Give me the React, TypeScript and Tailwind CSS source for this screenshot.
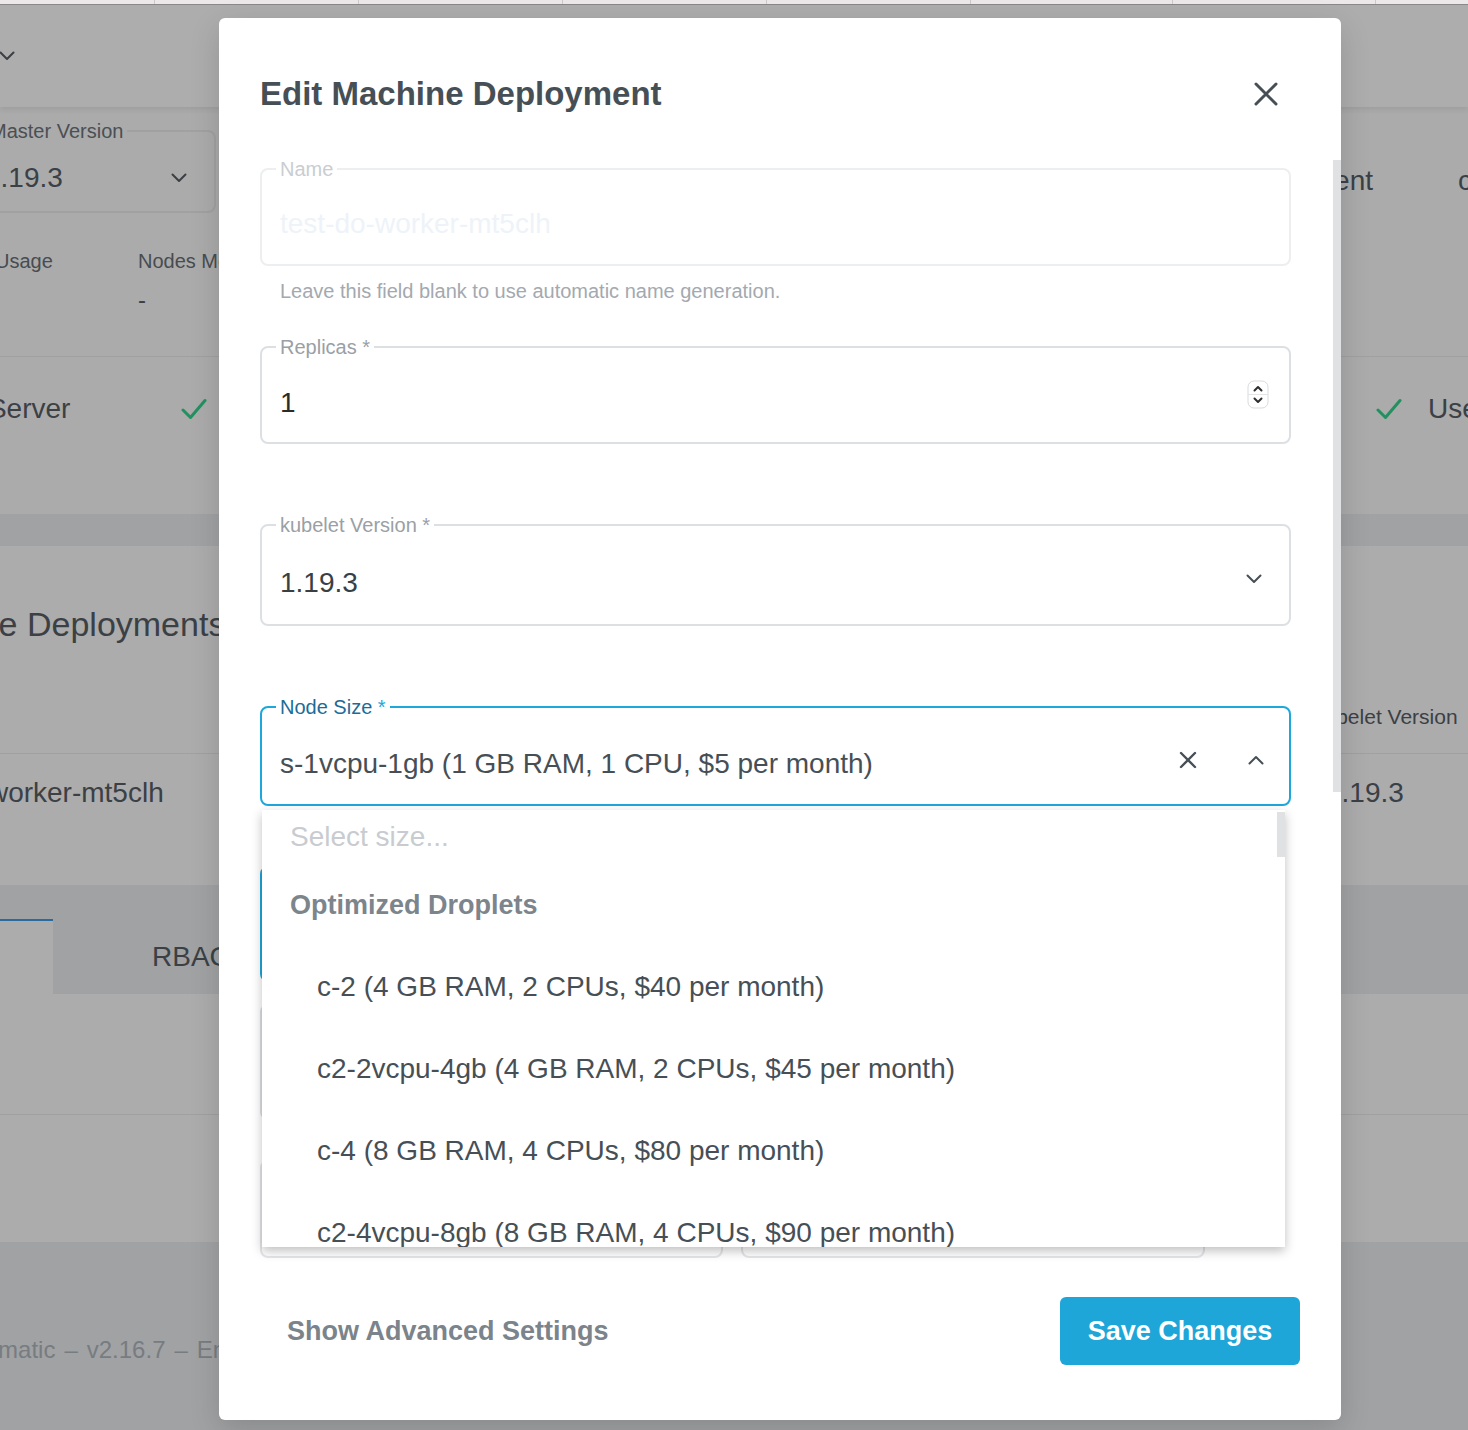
const options = [
  "c-2 (4 GB RAM, 2 CPUs, $40 per month)",
  "c2-2vcpu-4gb (4 GB RAM, 2 CPUs, $45 per month)",
  "c-4 (8 GB RAM, 4 CPUs, $80 per month)",
  "c2-4vcpu-8gb (8 GB RAM, 4 CPUs, $90 per month)",
]

function ChevronDown({ className = "" }: { className?: string }) {
  return (
    <svg width="16" height="10" viewBox="0 0 16 10" className={className} fill="none">
      <path d="M1.5 1.5 8 8l6.5-6.5" stroke="currentColor" strokeWidth="2" strokeLinecap="round" strokeLinejoin="round" />
    </svg>
  )
}

function CheckMark({ className = "" }: { className?: string }) {
  return (
    <svg width="26" height="22" viewBox="0 0 26 22" className={className} fill="none">
      <path d="M2 12l7.5 7.5L24 2.5" stroke="currentColor" strokeWidth="3" strokeLinecap="round" strokeLinejoin="round" />
    </svg>
  )
}

function Background() {
  return (
    <div className="flex flex-col text-[#3b4045]">
      <div className="flex h-[4px] bg-[#ece7e9]">
        <div className="w-[155px] shrink-0 border-r border-[#cdc9cb]" />
        <div className="w-[204px] shrink-0 border-r border-[#cdc9cb]" />
        <div className="w-[204px] shrink-0 border-r border-[#cdc9cb]" />
        <div className="w-[204px] shrink-0 border-r border-[#cdc9cb]" />
        <div className="w-[204px] shrink-0 border-r border-[#cdc9cb]" />
        <div className="w-[202px] shrink-0 border-r border-[#cdc9cb]" />
        <div className="w-[203px] shrink-0 border-r border-[#cdc9cb]" />
      </div>
      <div className="h-px bg-[#8b898a]" />

      {/* top card */}
      <div className="relative z-[1] flex h-[102px] items-center bg-[#adadad] shadow-[0_3px_5px_rgba(0,0,0,0.07)]">
        <ChevronDown className="-ml-[1px] text-[#3b4045]" />
      </div>

      {/* cluster details */}
      <div className="flex h-[250px] border-b border-[#a0a0a0] bg-[#ababab]">
        <div className="flex flex-col pt-[23px]">
          <div className="relative -ml-[100px] h-[83px] w-[316px] rounded-lg border-2 border-[#a1a1a1]">
            <span className="absolute -top-[11px] left-[84px] bg-[#ababab] px-1 text-[20px] leading-[20px] whitespace-nowrap text-[#4a4f54]">
              Master Version
            </span>
            <div className="flex h-full items-center justify-between pt-[13px] pl-[83px] pr-[27px]">
              <span className="text-[28px] leading-[34px]">1.19.3</span>
              <ChevronDown className="text-[#3b4045]" />
            </div>
          </div>
          <div className="-ml-[5px] mt-[36px] flex text-[20px] leading-[24px] text-[#474c51]">
            <div className="w-[143px] shrink-0">Usage</div>
            <div className="shrink-0 whitespace-nowrap">Nodes Metrics</div>
          </div>
          <div className="ml-[138px] mt-[15px] text-[24px] leading-[24px]">-</div>
        </div>
        <div className="ml-auto flex w-[268px] shrink-0 items-start pt-[57px] whitespace-nowrap">
          <div className="w-[173px] shrink-0 text-right text-[28px] leading-[34px]">Environment</div>
          <div className="ml-[85px] shrink-0 text-[28px] leading-[34px]">cri</div>
        </div>
      </div>

      {/* health row */}
      <div className="flex h-[157px] items-start bg-[#ababab] pt-[35px]">
        <div className="-ml-[65px] flex shrink-0 items-center">
          <span className="shrink-0 text-[28px] leading-[34px] whitespace-nowrap">API Server</span>
          <CheckMark className="ml-[111px] shrink-0 text-[#22915f]" />
        </div>
        <div className="ml-auto flex w-[92px] shrink-0 items-center whitespace-nowrap">
          <CheckMark className="shrink-0 text-[#22915f]" />
          <span className="ml-[26px] shrink-0 text-[28px] leading-[34px]">User SSH Keys</span>
        </div>
      </div>

      <div className="h-[32px] bg-[#a1a2a4]" />

      {/* machine deployments card */}
      <div className="flex h-[208px] border-b border-[#a0a0a0] bg-[#acacac]">
        <div className="-ml-[111px] shrink-0 pt-[58px] text-[34px] leading-[40px] whitespace-nowrap">Machine Deployments</div>
        <div className="ml-auto w-[154px] shrink-0 pt-[159px] text-[21px] leading-[24px] whitespace-nowrap">kubelet Version</div>
      </div>
      <div className="flex h-[131px] bg-[#acacac]">
        <div className="-ml-[107px] shrink-0 pt-[22px] text-[28px] leading-[34px] whitespace-nowrap">test-do-worker-mt5clh</div>
        <div className="ml-auto w-[142px] shrink-0 pt-[22px] text-[28px] leading-[34px]">1.19.3</div>
      </div>

      {/* tabs */}
      <div className="flex flex-col bg-[#a1a2a4] pt-[34px]">
        <div className="flex h-[75px] items-center">
          <div className="h-full w-[53px] shrink-0 border-t-2 border-[#2b6a9c] bg-[#acacac]" />
          <span className="ml-[99px] text-[28px] leading-[34px]">RBAC</span>
        </div>
      </div>
      <div className="h-[121px] border-b border-[#a0a0a0] bg-[#acacac]" />
      <div className="h-[127px] bg-[#acacac]" />

      {/* footer */}
      <div className="h-[200px] bg-[#a1a2a4] pt-[94px]">
        <div className="-ml-[66px] flex text-[24px] leading-[28px] whitespace-nowrap text-[#777c81]">
          <span>Kubermatic</span>
          <span className="mx-[9px]">–</span>
          <span>v2.16.7</span>
          <span className="mx-[9px]">–</span>
          <span>Enterprise Edition</span>
        </div>
      </div>
    </div>
  )
}

function Outlined({
  label,
  labelClass,
  borderClass,
  heightClass,
  children,
}: {
  label: React.ReactNode
  labelClass: string
  borderClass: string
  heightClass: string
  children: React.ReactNode
}) {
  return (
    <div className={`relative rounded-lg border-2 ${borderClass} ${heightClass}`}>
      <span className={`absolute -top-[11px] left-[14px] bg-white px-1 text-[20px] leading-[20px] ${labelClass}`}>{label}</span>
      <div className="flex h-full items-center pl-[18px] pt-[16px]">{children}</div>
    </div>
  )
}

function Modal() {
  return (
    <div className="absolute left-[219px] top-[18px] z-10 h-[1402px] w-[1122px] overflow-hidden rounded-[6px] bg-white shadow-[0_10px_30px_rgba(0,0,0,0.15)]">
      <div className="flex flex-col pl-[41px] pr-[50px] pt-[56px]">
        <div className="flex h-[40px] items-center justify-between">
          <h2 className="text-[33px] font-bold leading-[40px] text-[#474f56]">Edit Machine Deployment</h2>
          <svg width="24" height="24" viewBox="0 0 24 24" className="mr-[13px] text-[#474f56]" fill="none">
            <path d="M2 2l20 20M22 2 2 22" stroke="currentColor" strokeWidth="3" strokeLinecap="round" />
          </svg>
        </div>

        <div className="mt-[54px]">
          <Outlined label="Name" labelClass="text-[#c9cdd2]" borderClass="border-[#eceef0]" heightClass="h-[98px]">
            <span className="-mt-[2px] text-[28px] leading-[34px] text-[#eef3f9]">test-do-worker-mt5clh</span>
          </Outlined>
        </div>
        <p className="mt-[13px] pl-[20px] text-[20px] leading-[24px] text-[#a3a9af]">
          Leave this field blank to use automatic name generation.
        </p>

        <div className="mt-[43px]">
          <Outlined label="Replicas *" labelClass="text-[#9aa0a6]" borderClass="border-[#dde0e3]" heightClass="h-[98px]">
            <span className="flex-1 text-[28px] leading-[34px] text-[#2b2b2b]">1</span>
            <svg width="22" height="29" viewBox="0 0 22 29" className="mr-[20px] -mt-[18px]" fill="none">
              <rect x="1" y="1" width="20" height="27" rx="6" fill="#fff" stroke="#d9dbde" />
              <path d="M1 14.5h20" stroke="#e2e4e6" />
              <path d="M7.5 10.5 11 7l3.5 3.5M7.5 18.5 11 22l3.5-3.5" stroke="#2f2f2f" strokeWidth="2" strokeLinecap="round" strokeLinejoin="round" />
            </svg>
          </Outlined>
        </div>

        <div className="mt-[80px]">
          <Outlined label="kubelet Version *" labelClass="text-[#9aa0a6]" borderClass="border-[#dde0e3]" heightClass="h-[102px]">
            <span className="flex-1 text-[28px] leading-[34px] text-[#3a3f44]">1.19.3</span>
            <ChevronDown className="mr-[27px] -mt-[8px] text-[#474f56]" />
          </Outlined>
        </div>

        <div className="mt-[80px]">
          <Outlined
            label={
              <>
                <span className="text-[#1d6b98]">Node Size</span> <span className="text-[#24a6dc]">*</span>
              </>
            }
            labelClass=""
            borderClass="border-[#1ea7db]"
            heightClass="h-[100px]"
          >
            <span className="flex-1 text-[28px] leading-[34px] text-[#474f56]">s-1vcpu-1gb (1 GB RAM, 1 CPU, $5 per month)</span>
            <svg width="18" height="18" viewBox="0 0 18 18" className="-mt-[8px] text-[#474f56]" fill="none">
              <path d="M2 2l14 14M16 2 2 16" stroke="currentColor" strokeWidth="2.4" strokeLinecap="round" />
            </svg>
            <ChevronDown className="ml-[51px] mr-[25px] -mt-[8px] rotate-180 text-[#474f56]" />
          </Outlined>
        </div>

        {/* fields hidden under the open dropdown */}
        <div className="mt-[60px] h-[116px] w-[945px] rounded-lg border-2 border-[#1ea7db]" />
        <div className="mt-[22px] h-[116px] w-[945px] rounded-lg border-2 border-[#dde0e3]" />
        <div className="mt-[40px] flex gap-[18px]">
          <div className="h-[98px] w-[463px] rounded-lg border-2 border-[#e4e6e9]" />
          <div className="h-[98px] w-[464px] rounded-lg border-2 border-[#e4e6e9]" />
        </div>

        <div className="-mr-[9px] mt-[39px] flex h-[68px] items-center justify-between">
          <span className="ml-[27px] text-[27px] font-bold leading-[34px] text-[#7b838b]">Show Advanced Settings</span>
          <button className="h-[68px] w-[240px] rounded-md bg-[#1ea6d9] text-[27px] font-bold text-white">Save Changes</button>
        </div>
      </div>

      {/* modal scrollbar */}
      <div className="absolute right-0 top-[142px] h-[632px] w-[8px] bg-[#dfe1e3]" />

      {/* open select panel */}
      <div className="absolute left-[43px] top-[792px] h-[437px] w-[1023px] overflow-hidden bg-white shadow-[0_4px_10px_rgba(0,0,0,0.25)]">
        <div className="flex h-[54px] items-center pl-[28px] text-[28px] leading-[34px] text-[#c8ccd0]">Select size...</div>
        <div className="flex h-[82px] items-center pl-[28px] text-[27px] font-bold leading-[34px] text-[#7c848c]">Optimized Droplets</div>
        {options.map((o) => (
          <div key={o} className="flex h-[82px] items-center pl-[55px] text-[28px] leading-[34px] text-[#474f56]">
            {o}
          </div>
        ))}
        <div className="absolute right-0 top-[2px] h-[45px] w-[8px] bg-[#dfe1e3]" />
      </div>
    </div>
  )
}

export default function App() {
  return (
    <div className="relative h-[1430px] w-[1468px] overflow-hidden bg-[#acacac] font-['Liberation_Sans',Arial,sans-serif]">
      <Background />
      <Modal />
    </div>
  )
}
